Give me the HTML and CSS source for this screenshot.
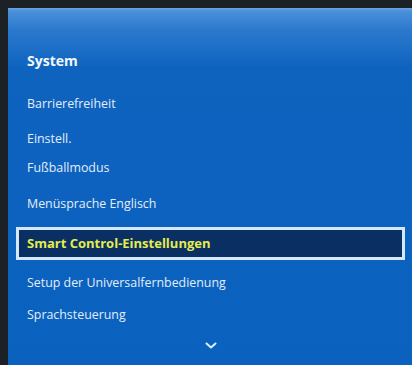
FILE: index.html
```html
<!DOCTYPE html>
<html lang="de">
<head>
	<meta charset="UTF-8">
	<title>System</title>
	<link rel="stylesheet" href="styles.css">
</head>
<body>
    <div class="panel">
        <h2 class="panel-title">System</h2>
        <ul class="menu">
            <li class="menu-item item-1">Barrierefreiheit</li>
            <li class="menu-item item-2">Einstell.</li>
            <li class="menu-item item-3">Fußballmodus</li>
            <li class="menu-item item-4">Menüsprache Englisch</li>
            <li class="menu-item active">Smart Control-Einstellungen</li>
            <li class="menu-item item-6">Setup der Universalfernbedienung</li>
            <li class="menu-item item-7">Sprachsteuerung</li>
        </ul>
        <div class="more">
            <svg width="12" height="7" viewBox="0 0 12 7">
                <path d="M1.5 1.5 L6 5.5 L10.5 1.5" fill="none" stroke="#dfeefc" stroke-width="2" stroke-linecap="round" stroke-linejoin="round"/>
            </svg>
        </div>
    </div>
</body>
</html>
```

FILE: styles.css
```css
html,
body {
    margin: 0;
    padding: 0;
}

body {
    background: #1c2126;
    padding: 8px 0 0 8px;
    height: 365px;
    box-sizing: border-box;
    overflow: hidden;
    font-family: "Open Sans", "Liberation Sans", sans-serif;
}

ul,
li {
    margin: 0;
    padding: 0;
}

li {
    list-style: none;
}

.panel {
    height: 357px;
    background: linear-gradient(to bottom, #6aa6e4 0, #4a90da 3px, #2b79cd 22px, #0e63bf 60px, #0a61be 100%);
    color: #e3eefa;
    box-sizing: border-box;
    padding-top: 44px;
}

.panel-title {
    margin: 0 0 0 19px;
    font-size: 14px;
    font-weight: 700;
    line-height: 18px;
    color: #f2f7fd;
}

.menu-item {
    font-size: 12.4px;
    line-height: 20px;
    padding-left: 19px;
}

.item-1 {
    margin-top: 24px;
}

.item-2 {
    margin-top: 15px;
}

.item-3 {
    margin-top: 9px;
}

.item-4 {
    margin-top: 16px;
}

.menu-item.active {
    margin: 13px 7px 0 8px;
    height: 33px;
    line-height: 27px;
    padding-left: 8px;
    box-sizing: border-box;
    border: 3px solid #d3e8fb;
    background: #0a2f63;
    color: #e6ec4e;
    font-size: 13px;
    font-weight: 700;
}

.item-6 {
    margin-top: 13px;
}

.item-7 {
    margin-top: 12px;
}

.more {
    margin-top: 17px;
    padding-left: 2px;
}

.more svg {
    display: block;
    margin: 0 auto;
}
```
